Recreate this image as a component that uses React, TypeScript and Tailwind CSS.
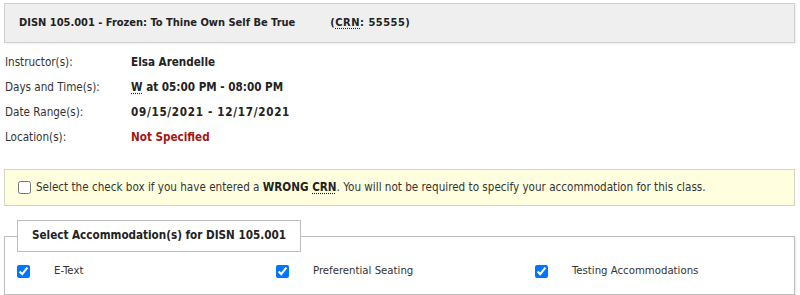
import React from 'react';

const rows = [
  { label: 'Instructor(s):', value: 'Elsa Arendelle' },
  { label: 'Days and Time(s):', value: 'W at 05:00 PM - 08:00 PM', abbr: true },
  { label: 'Date Range(s):', value: '09/15/2021 - 12/17/2021', wide: true },
  { label: 'Location(s):', value: 'Not Specified', red: true },
];

const accommodations = ['E-Text', 'Preferential Seating', 'Testing Accommodations'];

export default function App() {
  return (
    <div className="w-[800px] h-[295px] bg-white pl-[4px] pr-[5px] pt-[3px] text-[11.6px] text-[#333] font-['DejaVu_Sans_Condensed','DejaVu_Sans',sans-serif] overflow-hidden">
      {/* Course header */}
      <div className="h-[40px] flex items-center border border-[#cfcfcf] bg-[#efefef] pl-[14px] font-bold text-[11px] text-[#222] shadow-[1px_1px_2px_rgba(0,0,0,0.08)]">
        <span>DISN 105.001 - Frozen: To Thine Own Self Be True</span>
        <span className="ml-[35px] tracking-[0.5px]">
          (<abbr className="underline decoration-dotted underline-offset-2" title="Course Reference Number">CRN</abbr>: 55555)
        </span>
      </div>

      {/* Details */}
      <div className="mt-[7px]">
        {rows.map((r) => (
          <div key={r.label} className="h-[25px] flex items-center">
            <div className="w-[127px] pl-[1px]">{r.label}</div>
            <div
              className={
                r.red
                  ? 'font-bold text-[#a31515]'
                  : r.wide
                    ? 'font-bold text-[#222] tracking-[0.7px]'
                    : 'font-bold text-[#222]'
              }
            >
              {r.abbr ? (
                <>
                  <abbr className="underline decoration-dotted underline-offset-2" title="Wednesday">W</abbr>
                  {r.value.slice(1)}
                </>
              ) : (
                r.value
              )}
            </div>
          </div>
        ))}
      </div>

      {/* Wrong CRN notice */}
      <div className="mt-[19px] h-[37px] flex items-center border border-[#d6d6c0] bg-[#ffffe0] pl-[13px] text-[11.6px]">
        <input type="checkbox" className="w-[13px] h-[13px] m-0" />
        <span className="ml-[5px]">
          Select the check box if you have entered a{' '}
          <b className="text-[#222]">
            WRONG <abbr className="underline decoration-dotted underline-offset-2" title="Course Reference Number">CRN</abbr>
          </b>
          . You will not be required to specify your accommodation for this class.
        </span>
      </div>

      {/* Accommodations */}
      <fieldset className="mt-[14px] border border-[#bdbdbd] pl-[12px] pb-[4px] shadow-[1px_1px_2px_rgba(0,0,0,0.1)]">
        <legend className="h-[32px] px-[14px] flex items-center border border-[#bdbdbd] bg-white font-bold text-[#222]">
          Select Accommodation(s) for DISN 105.001
        </legend>
        <div className="grid grid-cols-3 h-[38px] items-center">
          {accommodations.map((a) => (
            <label key={a} className="flex items-center">
              <input type="checkbox" defaultChecked className="w-[13px] h-[13px] m-0" />
              <span className="ml-[24px] text-[11.3px]">{a}</span>
            </label>
          ))}
        </div>
      </fieldset>
    </div>
  );
}
